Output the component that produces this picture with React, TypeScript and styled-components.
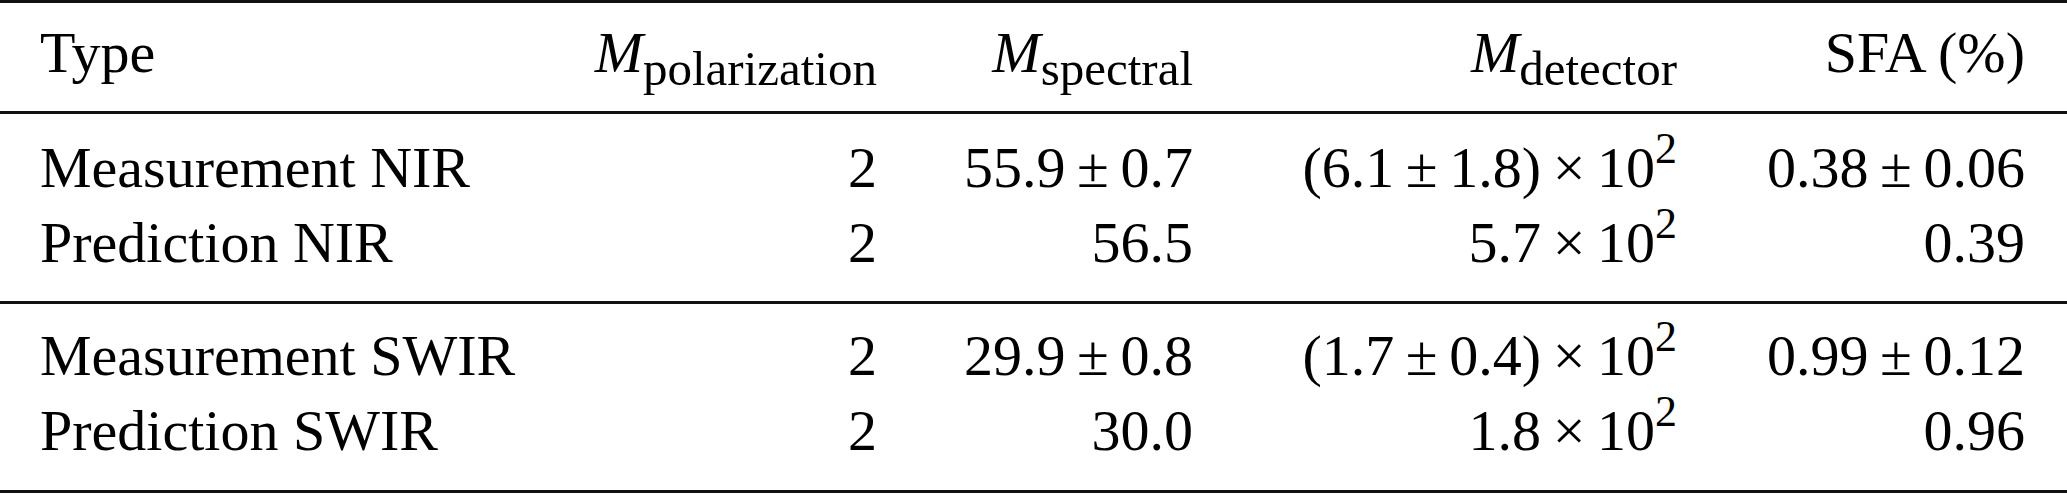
import React from "react";
import styled, { createGlobalStyle } from "styled-components";

const GlobalStyle = createGlobalStyle`
  html, body { margin: 0; padding: 0; background: #ffffff; }
  body { font-family: "Liberation Serif", "Times New Roman", serif; color: #000; }
`;

const Table = styled.div`
  width: 2067px;
  border-top: 3px solid #111;
  border-bottom: 3px solid #111;
  font-family: "Liberation Serif", "Times New Roman", serif;
  font-size: 58px;
  color: #000;
`;

const Group = styled.div<{ $top: number; $bottom: number; $rule?: boolean }>`
  padding: ${(p) => p.$top}px 42px ${(p) => p.$bottom}px 40px;
  border-bottom: ${(p) => (p.$rule ? "3px solid #111" : "none")};
`;

const Row = styled.div`
  display: grid;
  grid-template-columns: 520px 317px 316px 484px 348px;
  height: 75px;
  line-height: 75px;
  white-space: nowrap;
`;

const Cell = styled.div<{ $align?: "left" | "right" }>`
  text-align: ${(p) => p.$align ?? "right"};
`;

const MathVar = styled.span`
  font-style: italic;
`;

const Sub = styled.span`
  font-size: 49px;
  line-height: 0;
  vertical-align: -13px;
`;

const Sup = styled.span`
  font-size: 44px;
  line-height: 0;
  vertical-align: 24px;
`;

const Op = styled.span`
  margin: 0 0.2em;
`;

const PM = () => <Op>±</Op>;
const Times = () => <Op>×</Op>;

const Sym = ({ sub }: { sub: string }) => (
  <>
    <MathVar>M</MathVar>
    <Sub>{sub}</Sub>
  </>
);

const Pow = ({ base }: { base: React.ReactNode }) => (
  <>
    {base}
    <Times />
    10<Sup>2</Sup>
  </>
);

type RowData = {
  type: string;
  pol: string;
  spectral: React.ReactNode;
  detector: React.ReactNode;
  sfa: React.ReactNode;
};

const nir: RowData[] = [
  {
    type: "Measurement NIR",
    pol: "2",
    spectral: (
      <>
        55.9<PM />0.7
      </>
    ),
    detector: <Pow base={<>(6.1<PM />1.8)</>} />,
    sfa: (
      <>
        0.38<PM />0.06
      </>
    ),
  },
  {
    type: "Prediction NIR",
    pol: "2",
    spectral: "56.5",
    detector: <Pow base="5.7" />,
    sfa: "0.39",
  },
];

const swir: RowData[] = [
  {
    type: "Measurement SWIR",
    pol: "2",
    spectral: (
      <>
        29.9<PM />0.8
      </>
    ),
    detector: <Pow base={<>(1.7<PM />0.4)</>} />,
    sfa: (
      <>
        0.99<PM />0.12
      </>
    ),
  },
  {
    type: "Prediction SWIR",
    pol: "2",
    spectral: "30.0",
    detector: <Pow base="1.8" />,
    sfa: "0.96",
  },
];

const DataRow = ({ r }: { r: RowData }) => (
  <Row>
    <Cell $align="left">{r.type}</Cell>
    <Cell>{r.pol}</Cell>
    <Cell>{r.spectral}</Cell>
    <Cell>{r.detector}</Cell>
    <Cell>{r.sfa}</Cell>
  </Row>
);

export default function App() {
  return (
    <>
      <GlobalStyle />
      <Table>
        <Group $top={12} $bottom={21} $rule>
          <Row>
            <Cell $align="left">Type</Cell>
            <Cell>
              <Sym sub="polarization" />
            </Cell>
            <Cell>
              <Sym sub="spectral" />
            </Cell>
            <Cell>
              <Sym sub="detector" />
            </Cell>
            <Cell>SFA (%)</Cell>
          </Row>
        </Group>
        <Group $top={16} $bottom={21} $rule>
          {nir.map((r) => (
            <DataRow key={r.type} r={r} />
          ))}
        </Group>
        <Group $top={14} $bottom={22}>
          {swir.map((r) => (
            <DataRow key={r.type} r={r} />
          ))}
        </Group>
      </Table>
    </>
  );
}
